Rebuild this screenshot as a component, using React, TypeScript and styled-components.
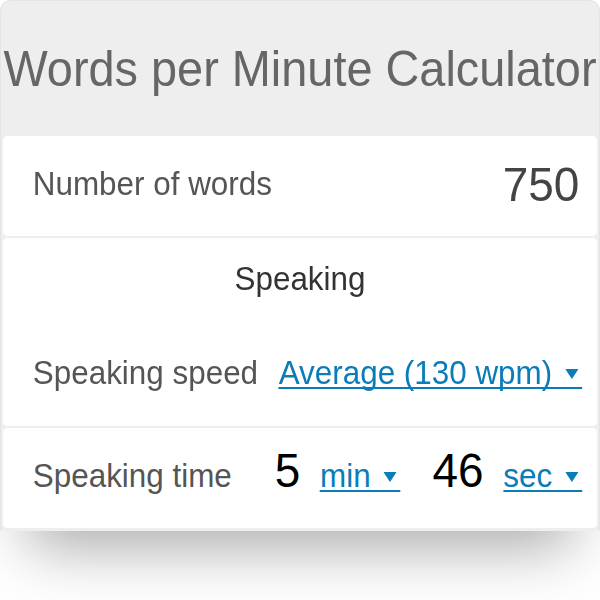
import styled, { createGlobalStyle } from "styled-components";

// The reference type is a bit narrower than Liberation Sans, so the whole
// calculator is laid out 640px wide and squeezed to 600px horizontally.
const SQUEEZE = 600 / 640;

const GlobalStyle = createGlobalStyle`
  html, body {
    margin: 0;
    padding: 0;
    background: #fff;
    min-height: 600px;
    overflow-x: hidden;
  }
  body {
    font-family: "Liberation Sans", Arial, sans-serif;
  }
`;

const Caret = () => (
  <CaretIcon viewBox="0 0 14 10" aria-hidden="true">
    <path d="M0 0H14L7 10Z" fill="currentColor" />
  </CaretIcon>
);

const Dropdown = ({ children }: { children: string }) => (
  <Select href="#">
    <SelectText>{children}</SelectText>
    <Caret />
  </Select>
);

const App = () => {
  return (
    <>
      <GlobalStyle />
      <Stage>
        <Card>
          <Header>
            <Title>Words per Minute Calculator</Title>
          </Header>
          <Row $lift={4}>
            <Label>Number of words</Label>
            <BigValue>750</BigValue>
          </Row>
          <Section>
            <SectionTitle>Speaking</SectionTitle>
            <SectionRow>
              <Line>
                <Label>Speaking speed</Label>
                <Dropdown>Average (130 wpm)</Dropdown>
              </Line>
            </SectionRow>
          </Section>
          <Row $lift={17}>
            <Line>
              <Label>Speaking time</Label>
              <TimeGroup>
                <TimeValue>5</TimeValue>
                <Dropdown>min</Dropdown>
                <TimeValue $spaced>46</TimeValue>
                <Dropdown>sec</Dropdown>
              </TimeGroup>
            </Line>
          </Row>
        </Card>
      </Stage>
    </>
  );
};

export default App;

const Stage = styled.div`
  width: 640px;
  transform: scaleX(${SQUEEZE});
  transform-origin: 0 0;
`;

const Card = styled.div`
  box-sizing: border-box;
  width: 640px;
  background: #eeeeee;
  border: 1px solid #e4e4e4;
  border-bottom: none;
  border-radius: 11px 11px 0 0;
  padding: 0 2px 3px;
  display: flex;
  flex-direction: column;
  gap: 2px;
  box-shadow: 0 46px 60px -30px rgba(0, 0, 0, 0.34);
`;

const Header = styled.div`
  height: 131px;
  padding-top: 2px;
  display: flex;
  align-items: center;
  justify-content: center;
`;

const Title = styled.h1`
  margin: 0;
  font-weight: normal;
  font-size: 50px;
  color: #666;
  white-space: nowrap;
`;

const Row = styled.div<{ $lift?: number }>`
  box-sizing: border-box;
  height: 100px;
  background: #fff;
  border-radius: 5px;
  display: flex;
  align-items: center;
  justify-content: space-between;
  padding: 0 16px ${(p) => p.$lift ?? 0}px 32px;
`;

const Section = styled.div`
  height: 188px;
  background: #fff;
  border-radius: 5px;
  display: flex;
  flex-direction: column;
`;

const SectionTitle = styled.div`
  height: 82px;
  display: flex;
  align-items: center;
  justify-content: center;
  font-size: 33.5px;
  color: #333;
`;

const SectionRow = styled.div`
  flex: 1;
  display: flex;
  align-items: center;
  padding: 0 16px 0 32px;
`;

const Line = styled.div`
  flex: 1;
  display: flex;
  align-items: baseline;
  justify-content: space-between;
`;

const Label = styled.span`
  font-size: 33.5px;
  color: #555;
`;

const BigValue = styled.span`
  font-size: 49px;
  color: #444;
  margin-right: 3px;
`;

const TimeGroup = styled.div`
  display: flex;
  align-items: baseline;
`;

const TimeValue = styled.span<{ $spaced?: boolean }>`
  font-size: 49px;
  color: #000;
  margin-right: 21px;
  margin-left: ${(p) => (p.$spaced ? "34px" : "0")};
`;

const Select = styled.a`
  display: inline-flex;
  align-items: flex-end;
  color: #0a7cb8;
  text-decoration: none;
  border-bottom: 2px solid #0a7cb8;
  white-space: nowrap;
  cursor: pointer;
`;

const SelectText = styled.span`
  font-size: 33.5px;
  line-height: 29px;
`;

const CaretIcon = styled.svg`
  width: 14px;
  height: 10px;
  margin: 0 4px 8px 14px;
  flex-shrink: 0;
`;
